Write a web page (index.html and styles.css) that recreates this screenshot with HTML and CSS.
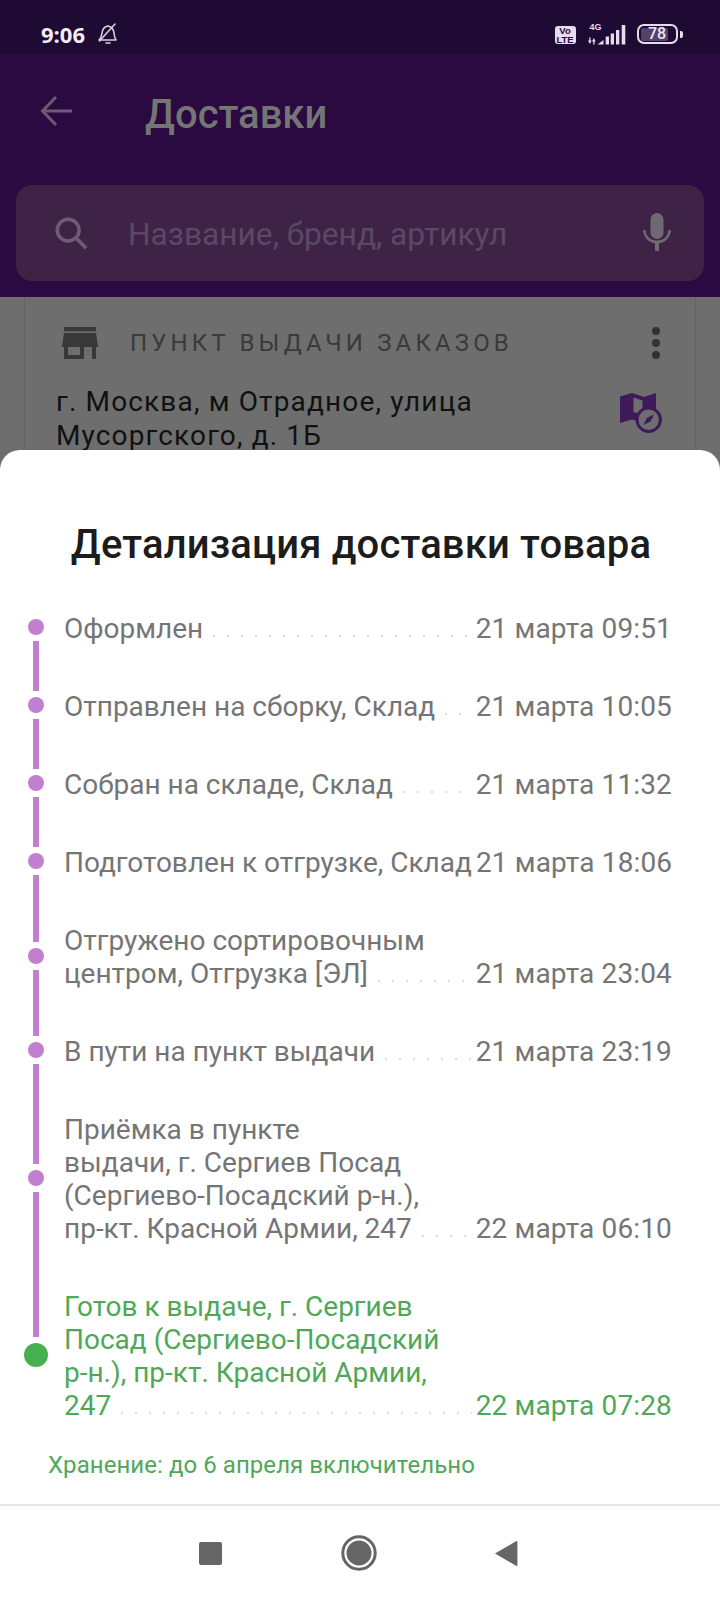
FILE: index.html
```html
<!DOCTYPE html>
<html lang="ru">
<head>
<meta charset="utf-8">
<title>Доставки</title>
<link rel="stylesheet" href="styles.css">
</head>
<body>
<div class="phone">
  <div class="statusbar">
    <div class="status-left">
      <span class="clock">9:06</span>
      <svg class="bell" viewBox="0 0 24 24" width="24" height="24" fill="none" stroke="#d6d0da" stroke-width="1.600" stroke-linejoin="round" stroke-linecap="round">
        <path d="M4 18c1.800-1.500 2.500-3.500 2.800-6 .4-4 2.600-7.500 6.200-8 3.500.5 5.500 3.500 6 7 .3 2.800.8 5.300 2 7H4z"/>
        <path d="M11 21h4"/>
        <path d="M4.500 19 20 2"/>
      </svg>
    </div>
    <div class="status-right">
      <span class="volte">Vo<br>LTE</span>
      <div class="network">
        <span class="net-label">4G</span>
        <svg class="signal" viewBox="0 0 38 20" width="38" height="20" fill="#e6dcea">
          <path d="M0 15.500h1.200v-3h1.300v3h1.200L1.850 19zM4 16.500h1.200v3h1.300v-3h1.200L5.850 13z"/>
          <path d="M9.500 19.500l6-4.500v4.500zM17.700 11.500H21v8h-3.300zM22.700 8.500H26v11h-3.300zM28 5h3.300v14.500H28zM33.700 0h3.600v19.500h-3.600z"/>
        </svg>
      </div>
      <div class="battery">
        <div class="battery-body"><span class="battery-fill"></span><span class="battery-num">78</span></div>
        <span class="battery-tip"></span>
      </div>
    </div>
  </div>

  <header class="appbar">
    <div class="appbar-top">
      <svg class="back" viewBox="0 0 32 32" width="32" height="32" fill="none" stroke="#6b5a74" stroke-width="3">
        <path d="M32 16H3M16 2 2.500 16 16 30"/>
      </svg>
      <h1 class="appbar-title">Доставки</h1>
    </div>
    <div class="search">
      <svg class="search-icon" viewBox="0 0 36 36" width="34" height="34" fill="none" stroke="#6e5b76" stroke-width="3.800">
        <circle cx="15" cy="15" r="11.500"/>
        <path d="M23 23l11 11"/>
      </svg>
      <span class="search-hint">Название, бренд, артикул</span>
      <svg class="mic" viewBox="0 0 30 40" width="30" height="40" fill="#6f6a72">
        <rect x="8.500" y="0" width="13" height="26" rx="6.500"/>
        <path d="M1 17h2.500c.6 6.500 5.300 10.500 11.500 10.500S25.900 23.500 26.500 17H29c-.6 7.500-5.600 12.500-12 13.300V38h-4v-7.700C6.600 29.500 1.600 24.500 1 17z"/>
      </svg>
    </div>
  </header>

  <main class="backdrop">
    <section class="card">
      <div class="card-head">
        <svg class="store" viewBox="0 0 36 32" width="36" height="32" fill="#383838">
          <path d="M2 0h32v4.300H2z"/>
          <path d="M2 6h32l2 14H0z"/>
          <path d="M2 20h4v8h12v-8h4v12H2zM30 20h4v12h-4z"/>
        </svg>
        <span class="card-label">ПУНКТ ВЫДАЧИ ЗАКАЗОВ</span>
        <div class="kebab"><i></i><i></i><i></i></div>
      </div>
      <div class="card-body">
        <p class="address">г. Москва, м Отрадное, улица<br>Мусоргского, д. 1Б</p>
        <svg class="mapicon" viewBox="0 0 43 41" width="43" height="41">
          <path fill="#3f1a5a" fill-rule="evenodd" d="M0 3.500 12 0l12 4 12-4v16a14 14 0 0 0-18 12l-6-1.500L0 30zM13.500 4.500V19l5 1.300a14 14 0 0 1 4-3.300V7.500z"/>
          <circle cx="28.700" cy="26.700" r="11.700" fill="#6e6e6e" stroke="#3f1a5a" stroke-width="3"/>
          <path fill="#3f1a5a" d="M34 21.500l-3.400 7.100L23.400 32l3.400-7.100z"/>
        </svg>
      </div>
    </section>
  </main>

  <aside class="sheet">
    <h2 class="sheet-title">Детализация доставки товара</h2>
    <ol class="steps">
      <li class="step">
        <div class="rail"><span class="dot"></span><span class="seg"></span></div>
        <div class="step-text"><div class="last"><span>Оформлен</span><i class="leader"></i><time>21 марта 09:51</time></div></div>
      </li>
      <li class="step">
        <div class="rail"><span class="seg"></span><span class="dot"></span><span class="seg"></span></div>
        <div class="step-text"><div class="last"><span>Отправлен на сборку, Склад</span><i class="leader"></i><time>21 марта 10:05</time></div></div>
      </li>
      <li class="step">
        <div class="rail"><span class="seg"></span><span class="dot"></span><span class="seg"></span></div>
        <div class="step-text"><div class="last"><span>Собран на складе, Склад</span><i class="leader"></i><time>21 марта 11:32</time></div></div>
      </li>
      <li class="step">
        <div class="rail"><span class="seg"></span><span class="dot"></span><span class="seg"></span></div>
        <div class="step-text"><div class="last"><span>Подготовлен к отгрузке, Склад</span><i class="leader"></i><time>21 марта 18:06</time></div></div>
      </li>
      <li class="step">
        <div class="rail"><span class="seg"></span><span class="dot"></span><span class="seg"></span></div>
        <div class="step-text"><div>Отгружено сортировочным</div><div class="last"><span>центром, Отгрузка [ЭЛ]</span><i class="leader"></i><time>21 марта 23:04</time></div></div>
      </li>
      <li class="step">
        <div class="rail"><span class="seg"></span><span class="dot"></span><span class="seg"></span></div>
        <div class="step-text"><div class="last"><span>В пути на пункт выдачи</span><i class="leader"></i><time>21 марта 23:19</time></div></div>
      </li>
      <li class="step">
        <div class="rail"><span class="seg"></span><span class="dot"></span><span class="seg"></span></div>
        <div class="step-text"><div>Приёмка в пункте</div><div>выдачи, г. Сергиев Посад</div><div>(Сергиево-Посадский р-н.),</div><div class="last"><span>пр-кт. Красной Армии, 247</span><i class="leader"></i><time>22 марта 06:10</time></div></div>
      </li>
      <li class="step step-current">
        <div class="rail"><span class="seg"></span><span class="dot"></span><span class="seg seg-none"></span></div>
        <div class="step-text"><div>Готов к выдаче, г. Сергиев</div><div>Посад (Сергиево-Посадский</div><div>р-н.), пр-кт. Красной Армии,</div><div class="last"><span>247</span><i class="leader"></i><time>22 марта 07:28</time></div></div>
      </li>
    </ol>
    <p class="storage">Хранение: до 6 апреля включительно</p>
    <nav class="navbar">
      <span class="nav-square"></span>
      <svg viewBox="0 0 36 36" width="36" height="36" class="nav-home">
        <circle cx="18" cy="18" r="16.200" fill="none" stroke="#666" stroke-width="3"/>
        <circle cx="18" cy="18" r="12.500" fill="#666"/>
      </svg>
      <svg viewBox="0 0 23 27" width="23" height="27" class="nav-back">
        <path d="M21 1.200a1 1 0 0 1 1.400 1v22.600a1 1 0 0 1-1.400 1L0 13.500z" fill="#666"/>
      </svg>
    </nav>
  </aside>
</div>
</body>
</html>
```

FILE: styles.css
```css
* { box-sizing: border-box; }
html, body { margin: 0; padding: 0; }
body { font-family: Roboto, "Noto Sans", sans-serif; background: #6e6e6e; }
h1, h2, p, ol { margin: 0; padding: 0; }

.phone {
  position: relative;
  width: 720px;
  height: 1600px;
  overflow: hidden;
  display: flex;
  flex-direction: column;
}

.statusbar {
  height: 54px;
  background: #1f0a33;
  display: flex;
  align-items: center;
  justify-content: space-between;
  padding: 14px 37px 0 41px;
  color: #f2eef4;
}
.status-left { display: flex; align-items: center; gap: 10px; }
.clock { font: 700 22px "Open Sans", sans-serif; }
.status-right { display: flex; align-items: center; }
.volte {
  width: 21px; height: 18px;
  margin-top: 2px;
  background: #e6dcea;
  color: #2a0a40;
  border-radius: 3px;
  font: 700 9.500px/8.500px "Liberation Sans", sans-serif;
  text-align: center;
  padding-top: 1px;
}
.network { position: relative; width: 38px; height: 24px; margin-left: 12px; }
.net-label {
  position: absolute; left: 2px; top: 0;
  font: 700 9px/10px "Liberation Sans", sans-serif;
  color: #e6dcea;
}
.signal { position: absolute; left: 0; bottom: 1px; }
.battery { display: flex; align-items: center; margin-left: 11px; }
.battery-body {
  position: relative;
  width: 41px; height: 20px;
  border: 2.500px solid #e6dcea;
  border-radius: 7px;
}
.battery-fill { position: absolute; left: 2px; top: 1.500px; bottom: 1.500px; width: 27px; background: #54426a; border-radius: 2px; }
.battery-num {
  position: absolute; left: 0; right: 0; top: -1.500px;
  font: 500 16px/17px Roboto, sans-serif;
  text-align: center; color: #ede6f0;
}
.battery-tip { width: 3px; height: 7px; margin-left: 2.500px; background: #e6dcea; border-radius: 0 2px 2px 0; }

.appbar { height: 243px; background: #2a0a40; padding: 0 16px; }
.appbar-top { height: 112px; display: flex; align-items: center; padding-left: 24px; }
.back { margin-top: 2px; }
.appbar-title {
  margin: 10px 0 0 73px;
  font-size: 40px; font-weight: 500; line-height: 46px;
  color: #757575;
}
.search {
  margin-top: 19px;
  height: 96px;
  background: #3e2347;
  border-radius: 16px;
  display: flex;
  align-items: center;
  padding: 0 32px 0 38px;
}
.search-hint { flex: 1; margin: 3px 0 0 40px; font-size: 31.700px; color: #5b4865; }

.backdrop { flex: 1; background: #6e6e6e; padding: 0 24px; }
.card {
  height: 100%;
  border-left: 1px solid #636363;
  border-right: 1px solid #636363;
  padding: 29px 35px 0 32px;
}
.card-head { display: flex; align-items: center; height: 33px; margin-left: 5px; }
.card-label {
  flex: 1;
  margin-left: 32px;
  font-size: 24px;
  letter-spacing: 4.150px;
  color: #3a3a3a;
}
.kebab { display: flex; flex-direction: column; gap: 4px; }
.kebab i { display: block; width: 8px; height: 8px; border-radius: 50%; background: #333; }
.card-body { display: flex; align-items: flex-start; justify-content: space-between; margin: 26px -3px 0 -1px; }
.address { font-size: 28px; line-height: 33.500px; letter-spacing: 1.150px; color: #111; }
.mapicon { margin-top: 8px; }

.sheet {
  position: absolute;
  left: 0; right: 0; bottom: 0;
  height: 1150px;
  background: #fff;
  border-radius: 20px 20px 0 0;
  display: flex;
  flex-direction: column;
}
.sheet-title {
  margin-top: 72px;
  padding-left: 2px;
  text-align: center;
  font-size: 40px;
  font-weight: 500;
  line-height: 46px;
  letter-spacing: 0.150px;
  color: #1c1c1c;
}
.steps { list-style: none; margin-top: 20px; padding: 0 48px 0 24px; }
.step { display: flex; color: #757575; }
.rail { width: 24px; flex: none; display: flex; flex-direction: column; align-items: center; margin-right: 16px; }
.seg { flex: 1; width: 6px; background: #c17fd0; }
.seg-none { background: transparent; }
.dot { flex: none; width: 16px; height: 16px; border-radius: 50%; background: #c17fd0; margin: 6px 0; }
.step:first-child .dot { margin-top: 0; }
.step:first-child .rail { padding-top: 31px; }
.step-text { flex: 1; min-width: 0; padding: 24px 0 21px; font-size: 28px; line-height: 33px; white-space: nowrap; }
.last { display: flex; align-items: baseline; }
.leader {
  flex: 1 1 0;
  min-width: 0;
  height: 4px;
  align-self: flex-end;
  margin-bottom: 7px;
  background: radial-gradient(circle, #dcdcdc 1px, transparent 1.400px) 4px center / 14px 4px repeat-x;
}
.last time { flex: none; margin-left: 4px; letter-spacing: 0.150px; }
.step-current { color: #4fa858; }
.step-current .dot { width: 24px; height: 24px; background: #46b050; }
.storage { margin: 7px 0 0 48px; font-size: 24px; line-height: 30px; letter-spacing: 0.060px; color: #4fa858; }
.navbar {
  margin-top: auto;
  height: 96px;
  border-top: 2px solid #e6e6e6;
  display: flex;
  align-items: center;
  padding-left: 199px;
}
.nav-square { width: 23px; height: 23px; background: #666; border-radius: 2px; }
.nav-home { margin-left: 119px; }
.nav-back { margin-left: 118px; }
```
